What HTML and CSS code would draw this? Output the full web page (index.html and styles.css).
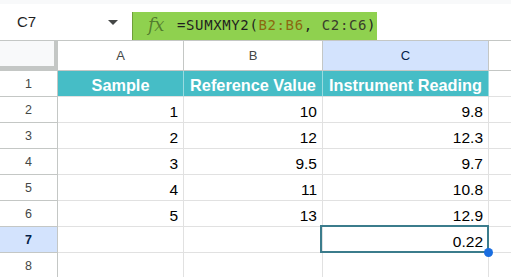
FILE: index.html
```html
<!DOCTYPE html>
<html>
<head>
<meta charset="utf-8">
<link rel="stylesheet" href="styles.css">
</head>
<body>
<div class="topstrip"></div>
<div class="bar">
  <div class="namebox">
    <span class="cellref">C7</span>
    <span class="caret"></span>
  </div>
  <div class="formula">
    <span class="fx">fx</span>
    <span class="ftext"><span class="fn">=SUMXMY2(</span><span class="r1">B2:B6</span><span class="fn">, </span><span class="r2">C2:C6</span><span class="fn">)</span></span>
  </div>
</div>
<div class="sheet">
  <div class="corner"></div>
  <div class="colhead">A</div>
  <div class="colhead">B</div>
  <div class="colhead sel">C</div>
  <div class="colhead last"></div>

  <div class="rowhead">1</div>
  <div class="cell th">Sample</div>
  <div class="cell th">Reference Value</div>
  <div class="cell th">Instrument Reading</div>
  <div class="cell last"></div>

  <div class="rowhead">2</div>
  <div class="cell num">1</div>
  <div class="cell num">10</div>
  <div class="cell num">9.8</div>
  <div class="cell last"></div>

  <div class="rowhead">3</div>
  <div class="cell num">2</div>
  <div class="cell num">12</div>
  <div class="cell num">12.3</div>
  <div class="cell last"></div>

  <div class="rowhead">4</div>
  <div class="cell num">3</div>
  <div class="cell num">9.5</div>
  <div class="cell num">9.7</div>
  <div class="cell last"></div>

  <div class="rowhead">5</div>
  <div class="cell num">4</div>
  <div class="cell num">11</div>
  <div class="cell num">10.8</div>
  <div class="cell last"></div>

  <div class="rowhead">6</div>
  <div class="cell num">5</div>
  <div class="cell num">13</div>
  <div class="cell num">12.9</div>
  <div class="cell last"></div>

  <div class="rowhead sel">7</div>
  <div class="cell num"></div>
  <div class="cell num"></div>
  <div class="cell num active">0.22<span class="handle"></span></div>
  <div class="cell last"></div>

  <div class="rowhead">8</div>
  <div class="cell num"></div>
  <div class="cell num"></div>
  <div class="cell num"></div>
  <div class="cell last"></div>
</div>
</body>
</html>
```
FILE: styles.css
```css
* { box-sizing: border-box; }
html, body { margin: 0; padding: 0; background: #fff; overflow: hidden; }
body { font-family: "Liberation Sans", Arial, sans-serif; width: 511px; height: 277px; }

.topstrip { height: 4px; background: #f8f9fa; }

.bar {
  display: flex;
  height: 37px;
  border-bottom: 1px solid #c4c7c5;
}
.namebox {
  width: 132px;
  display: flex;
  align-items: center;
  padding: 0 14px 0 17px;
}
.cellref { font-size: 15px; color: #1f1f1f; margin-top: -1px; }
.caret {
  margin-left: auto;
  width: 0; height: 0;
  border-left: 5px solid transparent;
  border-right: 5px solid transparent;
  border-top: 5px solid #444746;
}
.formula {
  align-self: flex-end;
  width: 245px;
  height: 28px;
  background: #8fd14f;
  border-left: 1px solid #6f9f3a;
  display: flex;
  align-items: center;
  padding: 0 0 3px 15px;
}
.fx {
  font-family: "DejaVu Serif", "Liberation Serif", serif;
  font-style: italic;
  font-size: 18px;
  color: rgba(0,0,0,0.42);
  width: 29px;
  letter-spacing: -0.5px;
}
.ftext {
  font-family: "DejaVu Sans Mono", monospace;
  font-size: 14px;
  letter-spacing: 0.62px;
  white-space: nowrap;
}
.fn { color: #1f1f1f; }
.r1 { color: #8a6a10; }
.r2 { color: #3a3d2c; }

.sheet {
  display: grid;
  grid-template-columns: 58px 126px 139px 166px 1fr;
  grid-template-rows: 30px repeat(8, 26px);
}
.corner {
  background: #f8f9fa;
  border-right: 4px solid #c4c7c5;
  border-bottom: 5px solid #c4c7c5;
}
.colhead {
  display: flex;
  align-items: center;
  justify-content: center;
  font-size: 13px;
  color: #444746;
  border-right: 1px solid #c4c7c5;
  border-bottom: 1px solid #c4c7c5;
}
.colhead.sel { background: #d3e3fd; color: #041e49; }
.colhead.last { border-right: none; }

.rowhead {
  display: flex;
  align-items: center;
  justify-content: center;
  font-size: 12.5px;
  color: #444746;
  border-right: 1px solid #c4c7c5;
  border-bottom: 1px solid #c4c7c5;
}
.rowhead.sel { background: #d3e3fd; color: #041e49; font-weight: bold; }

.cell {
  border-right: 1px solid #e1e1e1;
  border-bottom: 1px solid #e1e1e1;
  display: flex;
  align-items: flex-end;
  line-height: 15.5px;
  padding-bottom: 3px;
  white-space: nowrap;
}
.cell.last { border-right: none; }
.cell.th {
  background: #46bdc6;
  color: #fff;
  font-weight: bold;
  font-size: 16.3px;
  justify-content: center;
  border-right-color: rgba(255,255,255,0.45);
  border-bottom-color: #e1e1e1;
}
.cell.num {
  font-size: 15.5px;
  color: #000;
  justify-content: flex-end;
  padding-right: 5px;
}
.cell.active { position: relative; }
.cell.active::after {
  content: "";
  position: absolute;
  top: -2px; left: -3px; right: -1px; bottom: -1px;
  border: 2px solid #3b7c8c;
}
.handle {
  position: absolute;
  right: -5px;
  bottom: -5px;
  width: 9px;
  height: 9px;
  border-radius: 50%;
  background: #1a6ee0;
  z-index: 2;
}
```
